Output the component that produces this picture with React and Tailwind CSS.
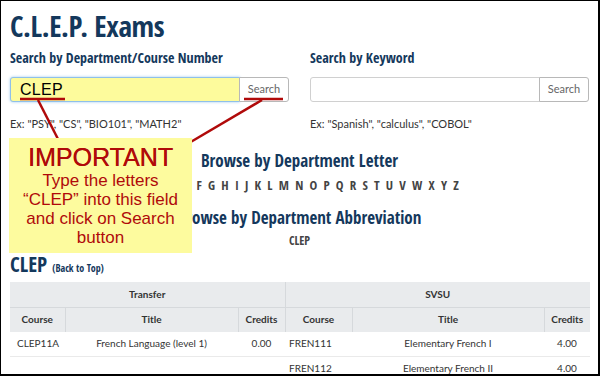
const cond = { fontFamily: '"Open Sans Condensed", "Open Sans", sans-serif', fontStretch: '75%' }

const letters = 'ABCDEFGHIJKLMNOPQRSTUVWXYZ'.split('')

function SearchBox({ label, value, hint, active }) {
  return (
    <div className="flex flex-col">
      <h2 style={cond} className="text-[14px] font-bold text-[#14385c] leading-[20px] h-[26px] pt-[4px]">{label}</h2>
      <div className="flex flex-row h-[25px] mt-[7px]">
        <div
          className={`flex-1 flex items-center rounded-l-[3px] ${
            active ? 'bg-[#fdfb9c] border border-[#8fc0ea] shadow-[0_0_3px_#9ec9ee]' : 'bg-white border border-[#d0d0d0]'
          }`}
        >
          {value ? (
            <span className="ml-[9px] text-[16px] leading-[20px] text-black tracking-[0.3px]" style={{ fontFamily: '"Liberation Sans", Arial, sans-serif' }}>
              {value}
            </span>
          ) : null}
        </div>
        <button className="w-[50px] border border-[#b8b8b8] rounded-r-[3px] bg-white text-[11px] text-[#666] -ml-px" style={{ fontFamily: 'Lato, sans-serif' }}>
          Search
        </button>
      </div>
      <p className="mt-[15px] text-[11px] leading-[14px] text-[#333]" style={{ fontFamily: 'Lato, sans-serif' }}>{hint}</p>
    </div>
  )
}

export default function App() {
  return (
    <div className="w-[600px] h-[376px] overflow-hidden relative bg-white border-l border-t border-black border-r-2 border-b-2 px-[9px]">
      <h1 style={cond} className="text-[29px] font-bold text-[#14385c] leading-[34px] pt-[8px] h-[43px] tracking-[-0.4px]">C.L.E.P. Exams</h1>

      <div className="grid grid-cols-2 gap-[21px]">
        <SearchBox label="Search by Department/Course Number" value="CLEP" hint={'Ex: "PSY", "CS", "BIO101", "MATH2"'} active />
        <SearchBox label="Search by Keyword" hint={'Ex: "Spanish", "calculus", "COBOL"'} />
      </div>

      <div className="flex flex-col items-center mt-[19px]" style={cond}>
        <h2 className="text-[17px] font-bold text-[#14385c] leading-[22px]">Browse by Department Letter</h2>
        <div className="flex flex-row gap-[6.2px] text-[13px] font-bold text-[#444] leading-[18px] mt-[4px] pr-[7px]">
          {letters.map((l) => (
            <span key={l}>{l}</span>
          ))}
        </div>
        <h2 className="text-[17px] font-bold text-[#14385c] leading-[22px] mt-[13px]">Browse by Department Abbreviation</h2>
        <div className="text-[12px] font-bold text-[#444] leading-[16px] mt-[4px]">CLEP</div>
      </div>

      <div className="flex flex-row items-baseline gap-[5px] mt-[3px] h-[24px]" style={cond}>
        <span className="text-[21px] font-bold text-[#14385c] leading-[24px]">CLEP</span>
        <span className="text-[10px] font-bold text-[#14385c]">(Back to Top)</span>
      </div>

      <table className="w-[580px] border-collapse text-[10px] text-[#333] mt-[6px]" style={{ fontFamily: 'Lato, sans-serif' }}>
        <colgroup>
          <col className="w-[55px]" />
          <col className="w-[173px]" />
          <col className="w-[47px]" />
          <col className="w-[67px]" />
          <col className="w-[192px]" />
          <col className="w-[46px]" />
        </colgroup>
        <thead>
          <tr className="bg-[#e9ebed] h-[25px] font-bold">
            <th colSpan={3} className="border-r border-b border-[#d6d9dc]">Transfer</th>
            <th colSpan={3} className="border-b border-[#d6d9dc]">SVSU</th>
          </tr>
          <tr className="bg-[#e9ebed] h-[25px] font-bold">
            <th className="border-r border-[#d6d9dc]">Course</th>
            <th className="border-r border-[#d6d9dc]">Title</th>
            <th className="border-r border-[#d6d9dc]">Credits</th>
            <th className="border-r border-[#d6d9dc]">Course</th>
            <th className="border-r border-[#d6d9dc]">Title</th>
            <th>Credits</th>
          </tr>
        </thead>
        <tbody>
          <tr className="h-[24px] border-b border-[#eaeaea]">
            <td className="pl-[7px]">CLEP11A</td>
            <td className="text-center">French Language (level 1)</td>
            <td className="text-center">0.00</td>
            <td className="pl-[4px]">FREN111</td>
            <td className="text-center">Elementary French I</td>
            <td className="text-center">4.00</td>
          </tr>
          <tr className="h-[24px]">
            <td></td>
            <td></td>
            <td></td>
            <td className="pl-[4px]">FREN112</td>
            <td className="text-center">Elementary French II</td>
            <td className="text-center">4.00</td>
          </tr>
        </tbody>
      </table>

      {/* annotation overlay */}
      <svg className="absolute left-0 top-0 pointer-events-none" width="600" height="376">
        <line x1="19" y1="98" x2="64" y2="98" stroke="#b00a0a" strokeWidth="2.5" />
        <line x1="243" y1="98" x2="282" y2="98" stroke="#b00a0a" strokeWidth="2.5" />
        <line x1="37" y1="99" x2="58" y2="140" stroke="#b00a0a" strokeWidth="2.5" />
        <line x1="261" y1="99" x2="188" y2="142" stroke="#b00a0a" strokeWidth="2.5" />
      </svg>
      <div
        className="absolute left-[8px] top-[137px] w-[183px] h-[115px] bg-[#fdfb9e] flex flex-col items-center text-[#b00a0a] leading-[19px] pt-[5px]"
        style={{ fontFamily: '"Liberation Sans", Arial, sans-serif' }}
      >
        <div className="text-[25px] leading-[28px] [text-shadow:0.3px_0_0_#b00a0a]">IMPORTANT</div>
        <div className="text-[17px]">Type the letters</div>
        <div className="text-[17px]">“CLEP” into this field</div>
        <div className="text-[17px]">and click on Search</div>
        <div className="text-[17px]">button</div>
      </div>
    </div>
  )
}
